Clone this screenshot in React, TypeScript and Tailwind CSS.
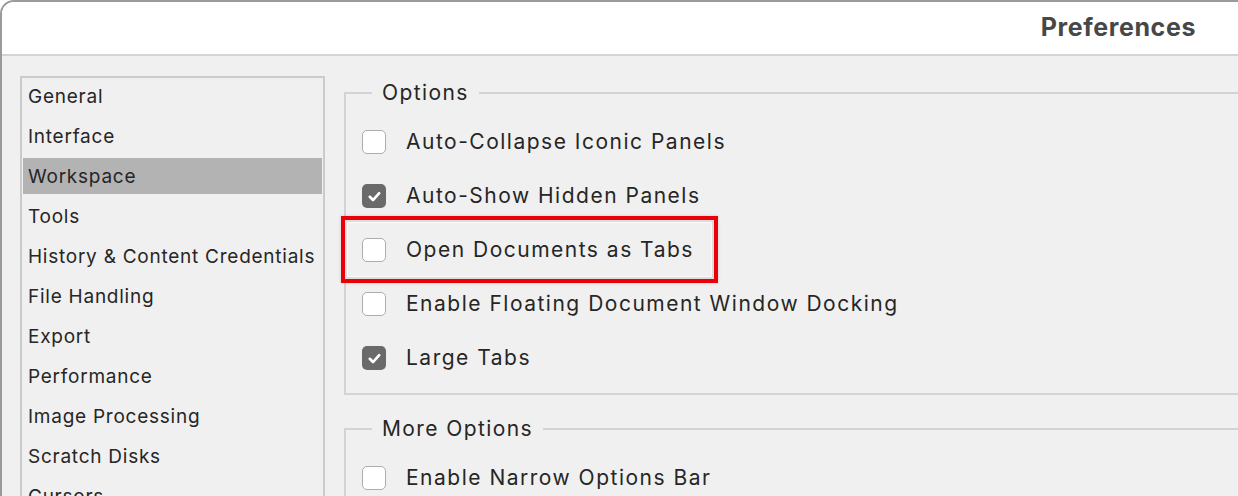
import React from "react";

const sections = [
  "General",
  "Interface",
  "Workspace",
  "Tools",
  "History & Content Credentials",
  "File Handling",
  "Export",
  "Performance",
  "Image Processing",
  "Scratch Disks",
  "Cursors",
];

const options = [
  { label: "Auto-Collapse Iconic Panels", checked: false },
  { label: "Auto-Show Hidden Panels", checked: true },
  { label: "Open Documents as Tabs", checked: false, highlight: true },
  { label: "Enable Floating Document Window Docking", checked: false },
  { label: "Large Tabs", checked: true },
];

const font = { fontFamily: "Inter, 'Noto Sans', sans-serif" };

function Checkbox({ checked }: { checked: boolean }) {
  if (checked) {
    return (
      <span className="flex h-[24px] w-[24px] shrink-0 items-center justify-center rounded-[5px] bg-[#6a6a6a]">
        <svg width="15" height="15" viewBox="0 0 14 14" fill="none">
          <path d="M2.6 7.3l3 3 5.8-6.4" stroke="white" strokeWidth="2.5" strokeLinecap="round" strokeLinejoin="round" />
        </svg>
      </span>
    );
  }
  return <span className="h-[24px] w-[24px] shrink-0 rounded-[5px] border-[1.5px] border-[#adadad] bg-white" />;
}

function Row({ label, checked, highlight }: { label: string; checked: boolean; highlight?: boolean }) {
  return (
    <div className="relative flex h-[54px] items-center gap-[20px] pl-[16px]">
      {highlight && (
        <div className="absolute left-[-5px] top-[-7px] h-[67px] w-[377px] border-4 border-[#e8000b] shadow-[0_0_3px_rgba(0,0,0,0.15)]">
          <div className="h-full w-full border-2 border-[#dcdcdc] shadow-[inset_0_0_0_1px_#fafafa]" />
        </div>
      )}
      <Checkbox checked={checked} />
      <span className="relative text-[21px] tracking-[1.5px] text-[#262626]">{label}</span>
    </div>
  );
}

function Group({ title, children }: { title: string; children: React.ReactNode }) {
  return (
    <fieldset className="w-[920px] border-2 border-[#d3d3d3] pb-[8px] pt-[10px]">
      <legend className="ml-[26px] px-[10px] text-[21px] leading-[24px] tracking-[1.4px] text-[#262626]">{title}</legend>
      {children}
    </fieldset>
  );
}

export default function App() {
  return (
    <div className="h-[496px] w-[1238px] overflow-hidden bg-white" style={font}>
      <div className="h-[560px] overflow-hidden rounded-tl-[14px] border-l-2 border-t-2 border-[#9a9a9a]">
        <div className="flex h-[54px] items-center justify-end border-b-2 border-[#d4d4d4] bg-white pr-[42px]">
          <span className="text-[25px] font-bold tracking-[0.6px] text-[#474747]">Preferences</span>
        </div>
        <div className="flex h-full items-start gap-[19px] bg-[#f0f0f0] pl-[18px] pt-[20px]">
          <div className="w-[305px] shrink-0 border-2 border-[#cbcbcb] px-px">
            <div className="flex flex-col gap-[4px]">
              {sections.map((s) => (
                <div
                  key={s}
                  className={`flex h-[36px] items-center pl-[5px] pt-[3px] text-[19px] tracking-[0.75px] text-[#262626] ${s === "Workspace" ? "bg-[#b3b3b3]" : ""}`}
                >
                  {s}
                </div>
              ))}
            </div>
          </div>
          <div className="flex flex-col gap-[22px] pt-[5px]">
            <Group title="Options">
              {options.map((o) => (
                <Row key={o.label} {...o} />
              ))}
            </Group>
            <Group title="More Options">
              <Row label="Enable Narrow Options Bar" checked={false} />
            </Group>
          </div>
        </div>
      </div>
    </div>
  );
}
